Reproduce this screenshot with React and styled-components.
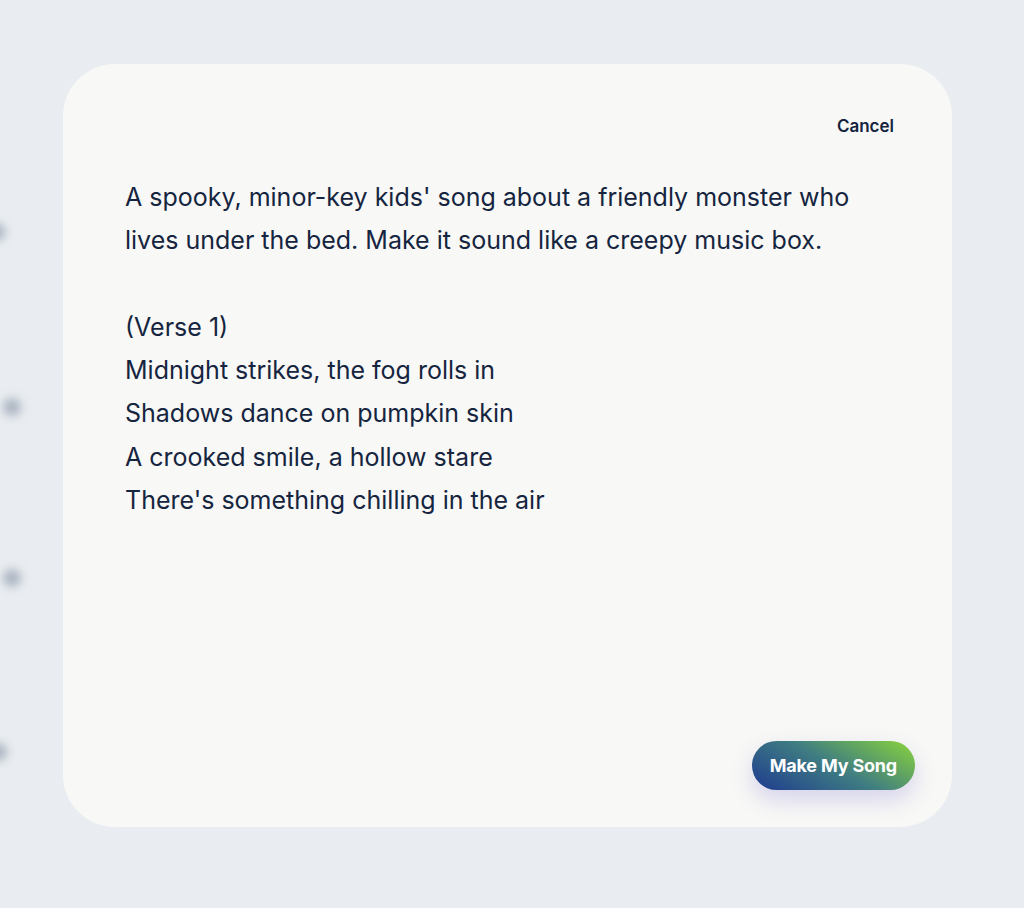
import React from "react";
import styled, { createGlobalStyle } from "styled-components";

const GlobalStyle = createGlobalStyle`
  html, body {
    margin: 0;
    padding: 0;
  }
  body {
    background: #e9edf1;
    font-family: Inter, "Noto Sans", sans-serif;
    -webkit-font-smoothing: antialiased;
  }
`;

const prompt = `A spooky, minor-key kids' song about a friendly monster who lives under the bed. Make it sound like a creepy music box.

(Verse 1)
Midnight strikes, the fog rolls in
Shadows dance on pumpkin skin
A crooked smile, a hollow stare
There's something chilling in the air`;

const dots = [
  { top: 232, left: -4 },
  { top: 407, left: 12 },
  { top: 578, left: 12 },
  { top: 752, left: -2 },
];

const App = () => {
  return (
    <>
      <GlobalStyle />
      <Page>
        {dots.map((d, i) => (
          <BlurDot key={i} style={{ top: d.top, left: d.left }} />
        ))}
        <Card>
          <TopBar>
            <CancelButton>Cancel</CancelButton>
          </TopBar>
          <PromptText>{prompt}</PromptText>
          <Footer>
            <SubmitButton>Make My Song</SubmitButton>
          </Footer>
        </Card>
      </Page>
    </>
  );
};

const Page = styled.div`
  position: relative;
  width: 1024px;
  height: 908px;
  overflow: hidden;
  box-sizing: border-box;
  padding: 64px 0 0 63px;
  background: #e9edf1;
`;

const BlurDot = styled.div`
  position: absolute;
  width: 18px;
  height: 18px;
  margin: -9px 0 0 -9px;
  border-radius: 50%;
  background: #aab3c0;
  filter: blur(5px);
`;

const Card = styled.div`
  position: relative;
  width: 889px;
  height: 763px;
  box-sizing: border-box;
  background: #f8f8f6;
  border-radius: 52px;
  display: flex;
  flex-direction: column;
  padding: 0 37px 37px 62px;
`;

const TopBar = styled.div`
  display: flex;
  justify-content: flex-end;
  padding: 52px 21px 0 0;
  height: 72px;
  box-sizing: border-box;
`;

const CancelButton = styled.button`
  border: none;
  background: none;
  padding: 0;
  font-family: Inter, sans-serif;
  font-weight: 600;
  font-size: 17px;
  line-height: 20px;
  color: #14233d;
  cursor: pointer;
`;

const PromptText = styled.div`
  flex: 1;
  padding-top: 40px;
  padding-right: 40px;
  white-space: pre-wrap;
  font-size: 25px;
  line-height: 43.3px;
  letter-spacing: 0;
  color: #16253f;
`;

const Footer = styled.div`
  display: flex;
  justify-content: flex-end;
`;

const SubmitButton = styled.button`
  height: 49px;
  padding: 0 18px;
  border: none;
  border-radius: 999px;
  background: linear-gradient(30deg, #1e3a8f 0%, #3f7d82 50%, #8ad53a 100%);
  color: #ffffff;
  font-family: Inter, sans-serif;
  font-weight: 700;
  font-size: 18px;
  letter-spacing: -0.2px;
  box-shadow: 0 10px 22px rgba(90, 80, 200, 0.22);
  cursor: pointer;
`;

export default App;
